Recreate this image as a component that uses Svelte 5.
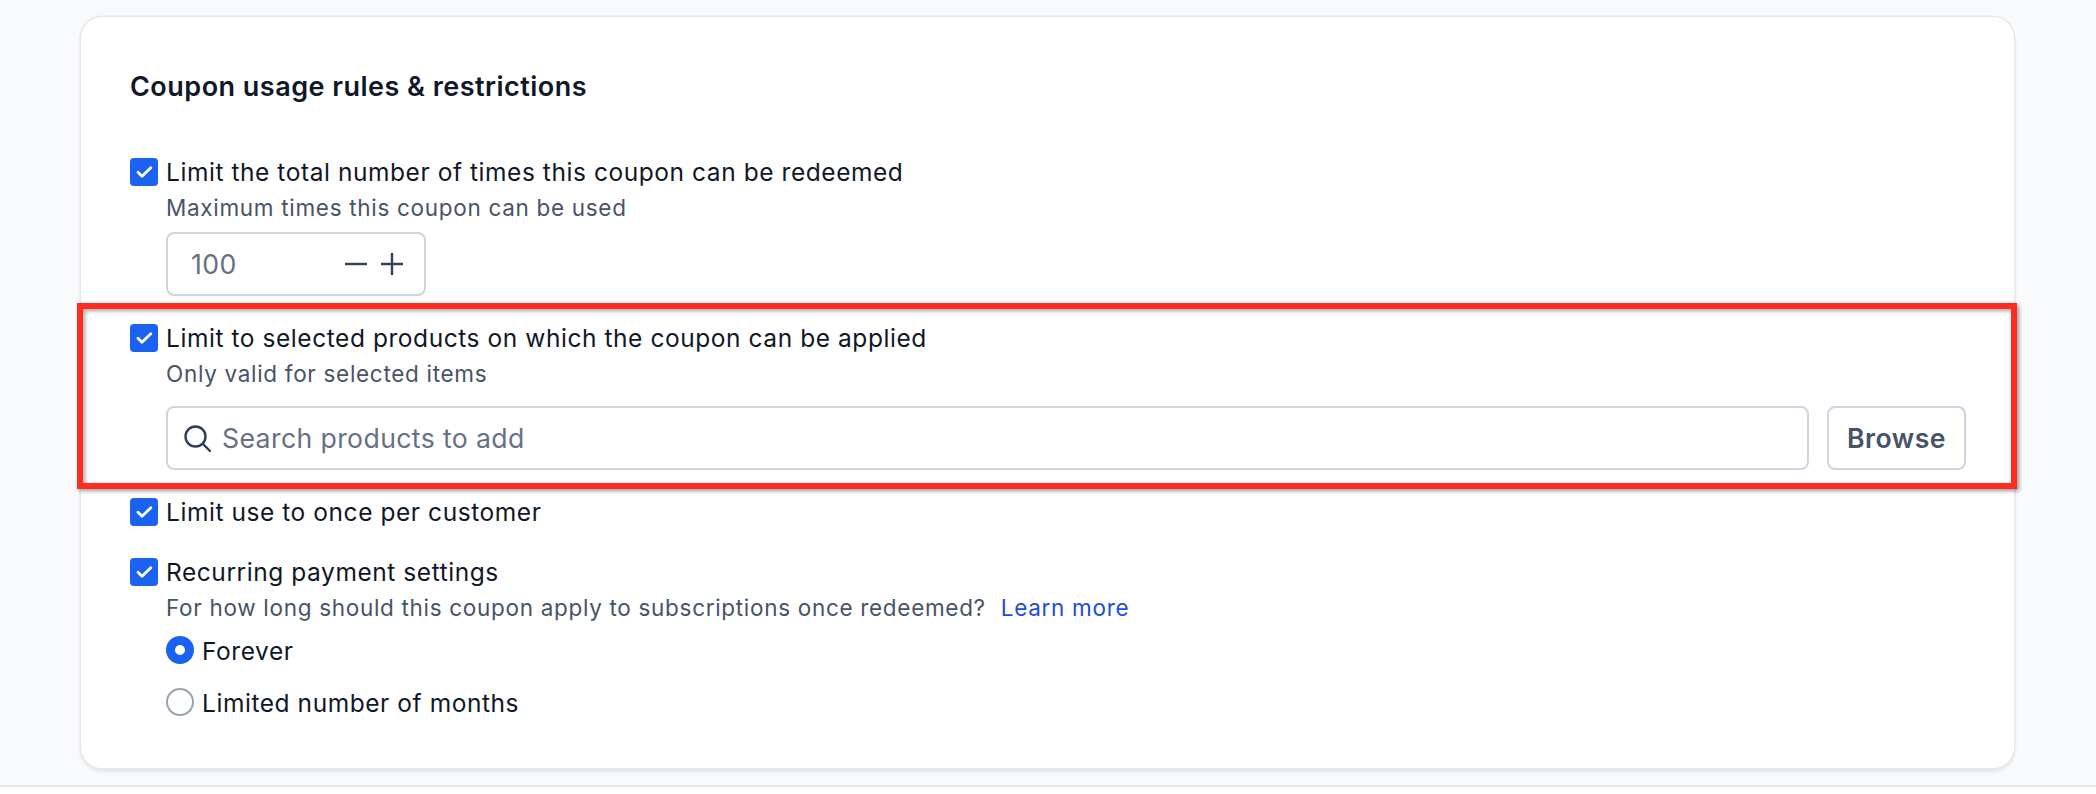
<script>
	let rows = { total: true, products: true, once: true, recurring: true };
</script>

{#snippet check()}
	<span class="box">
		<svg viewBox="0 0 28 28" width="28" height="28" fill="none">
			<path d="M8 14.2l4 4 8.8-8.4" stroke="#fff" stroke-width="2.8" stroke-linecap="round" stroke-linejoin="round" />
		</svg>
	</span>
{/snippet}

<div class="page">
	<section class="card">
		<h2>Coupon usage rules &amp; restrictions</h2>

		<div class="rule first">
			<div class="head">
				{@render check()}
				<span class="label">Limit the total number of times this coupon can be redeemed</span>
			</div>
			<p class="sub">Maximum times this coupon can be used</p>
			<div class="field stepper">
				<span class="placeholder">100</span>
				<span class="steps">
					<svg viewBox="0 0 22 22" width="22" height="22" fill="none" stroke="#344054" stroke-width="2.4">
						<path d="M0 11h22" />
					</svg>
					<svg viewBox="0 0 22 22" width="22" height="22" fill="none" stroke="#344054" stroke-width="2.4">
						<path d="M0 11h22M11 0v22" />
					</svg>
				</span>
			</div>
		</div>

		<div class="rule second">
			<div class="head">
				{@render check()}
				<span class="label">Limit to selected products on which the coupon can be applied</span>
			</div>
			<p class="sub">Only valid for selected items</p>
			<div class="search-row">
				<div class="field search">
					<svg viewBox="0 0 28 28" width="28" height="28" fill="none" stroke="#2f3f57" stroke-width="2.4" stroke-linecap="round">
						<circle cx="12.5" cy="12.5" r="10" />
						<path d="M20 20l7 7" />
					</svg>
					<span class="placeholder">Search products to add</span>
				</div>
				<button class="browse">Browse</button>
			</div>
		</div>

		<div class="rule third">
			<div class="head">
				{@render check()}
				<span class="label">Limit use to once per customer</span>
			</div>
		</div>

		<div class="rule fourth">
			<div class="head">
				{@render check()}
				<span class="label">Recurring payment settings</span>
			</div>
			<p class="sub">For how long should this coupon apply to subscriptions once redeemed? <a href="#learn">Learn more</a></p>
			<div class="radios">
				<div class="radio-row">
					<span class="radio on"></span>
					<span class="label">Forever</span>
				</div>
				<div class="radio-row">
					<span class="radio"></span>
					<span class="label">Limited number of months</span>
				</div>
			</div>
		</div>

		<div class="highlight"></div>
	</section>
</div>

<style>
	:global(body) {
		background: #fff;
		font-family: Inter, "Liberation Sans", sans-serif;
	}
	.page {
		box-sizing: border-box;
		height: 787px;
		padding: 17px 82px 0 81px;
		background: #f9fafb;
		border-bottom: 2px solid #e5e7eb;
	}
	.card {
		position: relative;
		box-sizing: border-box;
		height: 751px;
		padding: 51px 48px 0 49px;
		background: #fff;
		border-radius: 21px;
		box-shadow: 0 0 0 1.5px #e7e8ee, 0 3px 4px rgba(16, 24, 40, 0.12);
	}
	h2 {
		margin: 0;
		font-size: 27px;
		line-height: 38px;
		font-weight: 600;
		letter-spacing: 0.48px;
		color: #101828;
	}
	.rule.first { margin-top: 52px; }
	.rule.second { margin-top: 28px; }
	.rule.third { margin-top: 28px; }
	.rule.fourth { margin-top: 32px; }
	.head, .radio-row {
		display: flex;
		align-items: center;
		gap: 8px;
		height: 28px;
	}
	.box {
		flex: none;
		width: 28px;
		height: 28px;
		border-radius: 4px;
		background: #1a62f2;
	}
	.box svg { display: block; }
	.label {
		font-size: 24.5px;
		line-height: 28px;
		letter-spacing: 0.56px;
		color: #101828;
	}
	.radio-row .label {
		padding-top: 2px;
	}
	.sub {
		margin: 8px 0 0 36px;
		font-size: 22.5px;
		line-height: 28px;
		letter-spacing: 0.69px;
		color: #475467;
	}
	.sub a {
		margin-left: 8px;
		color: #1d4ed8;
		text-decoration: none;
	}
	.field {
		box-sizing: border-box;
		display: flex;
		align-items: center;
		border: 2px solid #cfd4e0;
		border-radius: 8px;
		background: #fff;
	}
	.placeholder {
		font-size: 26.67px;
		letter-spacing: 0.36px;
		color: #667085;
	}
	.stepper {
		justify-content: space-between;
		width: 260px;
		height: 64px;
		margin: 10px 0 0 36px;
		padding: 0 21px 0 23px;
	}
	.steps {
		display: flex;
		gap: 14px;
	}
	.steps svg { display: block; }
	.search-row {
		display: flex;
		gap: 18px;
		height: 64px;
		margin: 18px 0 0 36px;
	}
	.search {
		flex: 1;
		gap: 11px;
		padding: 0 0 0 15px;
	}
	.browse {
		box-sizing: border-box;
		width: 139px;
		border: 2px solid #cfd4e0;
		border-radius: 8px;
		background: #fff;
		font-family: inherit;
		font-size: 26.67px;
		font-weight: 600;
		letter-spacing: 0.5px;
		color: #475467;
	}
	.radios {
		display: flex;
		flex-direction: column;
		gap: 24px;
		margin: 14px 0 0 36px;
	}
	.radio {
		box-sizing: border-box;
		flex: none;
		width: 28px;
		height: 28px;
		border: 2px solid #98a2b3;
		border-radius: 50%;
	}
	.radio.on {
		border: 9px solid #1a62f2;
	}
	.highlight {
		position: absolute;
		left: -4px;
		top: 286px;
		width: 1940px;
		height: 186px;
		box-sizing: border-box;
		border: 6px solid #ff2d20;
		box-shadow: 2px 2px 4px rgba(0, 0, 0, 0.4), inset 2px 2px 4px rgba(0, 0, 0, 0.35);
		pointer-events: none;
	}
</style>
